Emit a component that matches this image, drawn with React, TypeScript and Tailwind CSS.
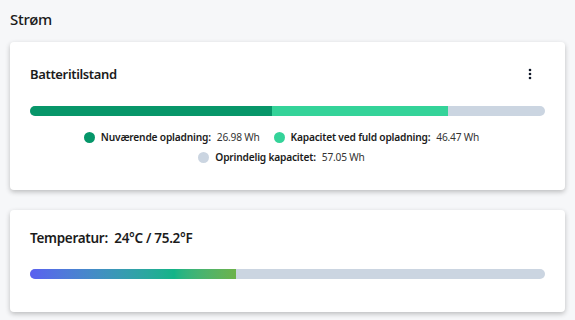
import React from "react"

const legend = [
    [
        { color: "bg-[#059669]", label: "Nuværende opladning:", value: "26.98 Wh" },
        { color: "bg-[#34d399]", label: "Kapacitet ved fuld opladning:", value: "46.47 Wh" },
    ],
    [{ color: "bg-[#cbd5e1]", label: "Oprindelig kapacitet:", value: "57.05 Wh" }],
]

function Kebab() {
    return (
        <svg width="12" height="12" viewBox="0 0 12 12" className="text-gray-900">
            <circle cx="6" cy="2" r="1.3" fill="currentColor" />
            <circle cx="6" cy="6" r="1.3" fill="currentColor" />
            <circle cx="6" cy="10" r="1.3" fill="currentColor" />
        </svg>
    )
}

export default function App() {
    return (
        <div className="min-h-[320px] bg-[#f6f7f9] px-[10px] pt-[9px] pb-4 font-['Noto_Sans',sans-serif] text-[#1b1b1b]">
            <h2 className="text-[15px] leading-[20px] font-medium tracking-[-0.3px]">Strøm</h2>

            <div className="mt-[13px] rounded-[4px] bg-white px-5 pt-[22px] pb-[24px] shadow-[0_2px_5px_rgba(0,0,0,0.24)]">
                <div className="flex items-center justify-between">
                    <h3 className="text-[13px] leading-[20px] font-semibold tracking-[-0.35px]">Batteritilstand</h3>
                    <button className="mr-[7px] flex h-5 w-4 items-center justify-center">
                        <Kebab />
                    </button>
                </div>

                <div className="mt-[22px] flex h-[10px] w-full overflow-hidden rounded-full bg-[#cbd5e1]">
                    <div className="h-full w-[47%] bg-[#079669]" />
                    <div className="h-full w-[34.2%] bg-[#34d399]" />
                </div>

                <div className="mt-[12px] flex flex-col items-center gap-[2px] pr-[12px]">
                    {legend.map((row, i) => (
                        <div key={i} className="flex items-center gap-[14px]">
                            {row.map((item) => (
                                <div key={item.label} className="flex items-center gap-[6px] text-[10.2px] leading-[18px] tracking-[-0.2px]">
                                    <span className={`h-[11px] w-[11px] rounded-full ${item.color}`} />
                                    <span className="font-semibold">{item.label}</span>
                                    <span className="text-[#333]">{item.value}</span>
                                </div>
                            ))}
                        </div>
                    ))}
                </div>
            </div>

            <div className="mt-[20px] rounded-[4px] bg-white px-5 pt-[18px] pb-[33px] shadow-[0_2px_5px_rgba(0,0,0,0.24)]">
                <h3 className="text-[13.5px] leading-[20px] font-semibold tracking-[-0.3px]">
                    Temperatur:&nbsp; 24°C / 75.2°F
                </h3>
                <div className="mt-[21px] flex h-[10px] w-full overflow-hidden rounded-full bg-[#cbd5e1]">
                    <div className="h-full w-[40%] bg-gradient-to-r from-[#5a5ff0] via-[#12b487] via-70% to-[#6cb24a]" />
                </div>
            </div>
        </div>
    )
}
